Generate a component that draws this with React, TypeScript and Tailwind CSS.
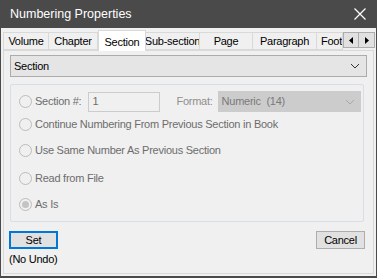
import React from "react";

const font = { fontFamily: '"Liberation Sans", Arial, sans-serif' };

function Radio({ checked = false }: { checked?: boolean }) {
  return (
    <span className="w-[13px] h-[13px] rounded-full border border-[#bcbcbc] bg-[#f0f0f0] flex items-center justify-center shrink-0">
      {checked && <span className="w-[7px] h-[7px] rounded-full bg-[#c4c4c4]" />}
    </span>
  );
}

function Chevron({ color }: { color: string }) {
  return (
    <svg width="10" height="6" viewBox="0 0 10 6">
      <path d="M1 1 L5 5 L9 1" fill="none" stroke={color} strokeWidth="1" />
    </svg>
  );
}

const tabs = [
  { name: "Volume", w: 46 },
  { name: "Chapter", w: 49 },
  { name: "Section", w: 48, sel: true },
  { name: "Sub-section", w: 54 },
  { name: "Page", w: 53 },
  { name: "Paragraph", w: 64 },
  { name: "Footnote", w: 26, clip: true },
];

export default function App() {
  return (
    <div className="w-[377px] h-[278px] bg-[#4a4a4a] flex flex-col text-[11px] tracking-[-0.25px] text-black whitespace-nowrap" style={font}>
      <div className="h-[28px] flex items-center justify-between pl-[10px] pr-[11px] shrink-0">
        <span className="text-white text-[12.5px] tracking-normal leading-none">Numbering Properties</span>
        <svg width="12" height="12" viewBox="0 0 12 12">
          <path d="M0.5 0.5 L11.5 11.5 M11.5 0.5 L0.5 11.5" stroke="#ffffff" strokeWidth="1.2" />
        </svg>
      </div>
      <div className="flex-1 mx-[1px] mb-[2px] bg-[#f0f0f0] flex flex-col px-[2px] pt-[2px] pb-[2px]">
        <div className="h-[20px] flex items-end relative z-10 shrink-0">
          {tabs.map((t) =>
            t.sel ? (
              <div
                key={t.name}
                style={{ width: t.w }}
                className="h-[21px] -mb-[1px] bg-white border border-b-0 border-[#d9d9d9] flex items-start justify-center pt-[3px] shrink-0"
              >
                {t.name}
              </div>
            ) : (
              <div
                key={t.name}
                style={{ width: t.w }}
                className={`h-[18px] bg-[#f0f0f0] border border-l-0 first:border-l border-[#d9d9d9] flex items-center shrink-0 overflow-hidden ${t.clip ? "justify-start pl-[4px]" : "justify-center"}`}
              >
                {t.name}
              </div>
            )
          )}
          <div className="flex items-center mb-[2px] h-[16px]">
            <div className="w-[16px] h-[16px] border border-[#adadad] bg-[#e1e1e1] flex items-center justify-center">
              <svg width="4" height="7" viewBox="0 0 4 7"><path d="M4 0 L0 3.5 L4 7 Z" fill="#000" /></svg>
            </div>
            <div className="w-[16px] h-[16px] border border-l-0 border-[#adadad] bg-[#e1e1e1] flex items-center justify-center">
              <svg width="4" height="7" viewBox="0 0 4 7"><path d="M0 0 L4 3.5 L0 7 Z" fill="#000" /></svg>
            </div>
          </div>
        </div>
        <div className="flex-1 border border-[#d9d9d9] bg-[#f0f0f0] flex flex-col px-[6px] pt-[4px]">
          <div className="h-[22px] bg-[#e5e5e5] border border-[#acacac] flex items-center justify-between pl-[3px] pr-[6px]">
            <span>Section</span>
            <Chevron color="#333" />
          </div>
          <div className="mt-[7px] mr-[3px] h-[138px] border border-[#d5dfe5] rounded-[2px] flex flex-col pl-[8px] text-[#6d6d6d]">
            <div className="flex items-center mt-[6px] h-[21px]">
              <Radio />
              <span className="ml-[3px]">Section #:</span>
              <div className="ml-[7px] w-[72px] h-[20px] border border-[#cccccc] bg-[#f0f0f0] flex items-center pl-[3px] shrink-0">1</div>
              <span className="ml-[16px] text-[#8f8f8f]">Format:</span>
              <div className="ml-[5px] w-[143px] h-[21px] bg-[#cccccc] flex items-center justify-between pl-[4px] pr-[6px] shrink-0">
                <span className="text-[#7a7a7a]">Numeric&nbsp; (14)</span>
                <Chevron color="#a8a8a8" />
              </div>
            </div>
            <div className="flex items-center mt-[4px] h-[16px]">
              <Radio />
              <span className="ml-[3px]">Continue Numbering From Previous Section in Book</span>
            </div>
            <div className="flex items-center mt-[10px] h-[16px]">
              <Radio />
              <span className="ml-[3px]">Use Same Number As Previous Section</span>
            </div>
            <div className="flex items-center mt-[12px] h-[16px]">
              <Radio />
              <span className="ml-[3px]">Read from File</span>
            </div>
            <div className="flex items-center mt-[10px] h-[16px]">
              <Radio checked />
              <span className="ml-[3px]">As Is</span>
            </div>
          </div>
          <div className="flex justify-between mt-[9px] mr-[2px]">
            <div className="flex flex-col items-start -ml-[1px]">
              <div className="w-[49px] h-[18px] border-2 border-[#0078d7] bg-[#e1e1e1] flex items-center justify-center">Set</div>
              <span className="mt-[2px]">(No Undo)</span>
            </div>
            <div className="w-[49px] h-[18px] border border-[#adadad] bg-[#e1e1e1] flex items-center justify-center">Cancel</div>
          </div>
        </div>
      </div>
    </div>
  );
}
